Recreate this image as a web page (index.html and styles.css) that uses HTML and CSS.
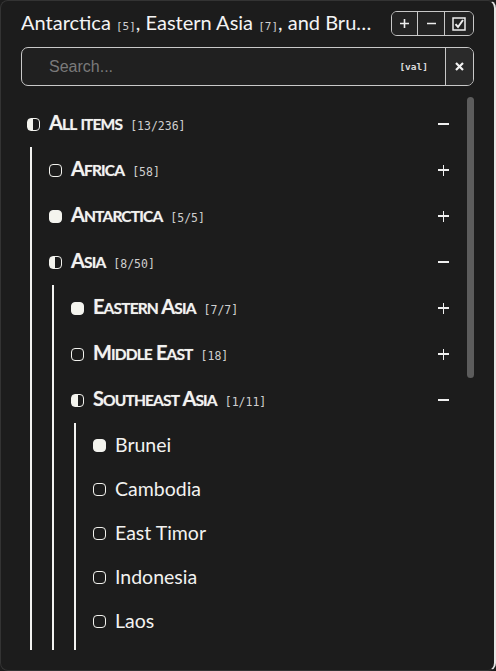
FILE: index.html
```html
<!DOCTYPE html>
<html lang="en">
<head>
<meta charset="utf-8">
<title>Region picker</title>
<link rel="stylesheet" href="styles.css">
</head>
<body>
<div class="panel">
  <header class="head">
    <h1 class="title">Antarctica <span class="tcount">[5]</span>, Eastern Asia <span class="tcount">[7]</span>, and Brunei <span class="tcount">[1]</span></h1>
    <div class="btns">
      <button class="btn b-plus" aria-label="Expand all"><svg width="9" height="9" viewBox="0 0 9 9"><path d="M0 4.5H9M4.5 0V9" stroke="#eee" stroke-width="1.6"/></svg></button>
      <button class="btn b-minus" aria-label="Collapse all"><svg width="9" height="9" viewBox="0 0 9 9"><path d="M0 4.5H9" stroke="#eee" stroke-width="1.4"/></svg></button>
      <button class="btn b-check" aria-label="Select all"><svg width="14" height="14" viewBox="0 0 14 14"><rect x="1" y="1" width="12" height="12" fill="none" stroke="#eee" stroke-width="1.5"/><path d="M3.5 7.2L6 10L11 3" fill="none" stroke="#eee" stroke-width="2"/></svg></button>
    </div>
  </header>

  <div class="search">
    <input class="input" type="text" placeholder="Search...">
    <span class="val">[val]</span>
    <button class="clear" aria-label="Clear"><svg width="9" height="9" viewBox="0 0 9 9"><path d="M1 1L8 8M8 1L1 8" stroke="#f2f2f2" stroke-width="2.2"/></svg></button>
  </div>

  <div class="tree-wrap">
    <div class="tree">
      <ul class="list root">
        <li>
          <div class="row"><span class="box half"></span><span class="text"><span class="label sc">A<span class="lc">ll</span> <span class="lc">items</span></span><span class="count">[13/236]</span></span><span class="tog minus"></span></div>
          <ul class="list kids">
            <li><div class="row"><span class="box"></span><span class="text"><span class="label sc">A<span class="lc">frica</span></span><span class="count">[58]</span></span><span class="tog plus"></span></div></li>
            <li><div class="row"><span class="box full"></span><span class="text"><span class="label sc">A<span class="lc">ntarctica</span></span><span class="count">[5/5]</span></span><span class="tog plus"></span></div></li>
            <li>
              <div class="row"><span class="box half"></span><span class="text"><span class="label sc">A<span class="lc">sia</span></span><span class="count">[8/50]</span></span><span class="tog minus"></span></div>
              <ul class="list kids">
                <li><div class="row"><span class="box full"></span><span class="text"><span class="label sc">E<span class="lc">astern</span> A<span class="lc">sia</span></span><span class="count">[7/7]</span></span><span class="tog plus"></span></div></li>
                <li><div class="row"><span class="box"></span><span class="text"><span class="label sc">M<span class="lc">iddle</span> E<span class="lc">ast</span></span><span class="count">[18]</span></span><span class="tog plus"></span></div></li>
                <li>
                  <div class="row"><span class="box half"></span><span class="text"><span class="label sc">S<span class="lc">outheast</span> A<span class="lc">sia</span></span><span class="count">[1/11]</span></span><span class="tog minus"></span></div>
                  <ul class="list kids">
                    <li><div class="row leaf"><span class="box full"></span><span class="text"><span class="label">Brunei</span></span></div></li>
                    <li><div class="row leaf"><span class="box"></span><span class="text"><span class="label">Cambodia</span></span></div></li>
                    <li><div class="row leaf"><span class="box"></span><span class="text"><span class="label">East Timor</span></span></div></li>
                    <li><div class="row leaf"><span class="box"></span><span class="text"><span class="label">Indonesia</span></span></div></li>
                    <li><div class="row leaf"><span class="box"></span><span class="text"><span class="label">Laos</span></span></div></li>
                    <li><div class="row leaf"><span class="box"></span><span class="text"><span class="label">Malaysia</span></span></div></li>
                    <li><div class="row leaf"><span class="box"></span><span class="text"><span class="label">Myanmar</span></span></div></li>
                    <li><div class="row leaf"><span class="box"></span><span class="text"><span class="label">Philippines</span></span></div></li>
                    <li><div class="row leaf"><span class="box"></span><span class="text"><span class="label">Singapore</span></span></div></li>
                    <li><div class="row leaf"><span class="box"></span><span class="text"><span class="label">Thailand</span></span></div></li>
                    <li><div class="row leaf"><span class="box"></span><span class="text"><span class="label">Vietnam</span></span></div></li>
                  </ul>
                </li>
                <li><div class="row"><span class="box"></span><span class="text"><span class="label sc">S<span class="lc">outh</span> A<span class="lc">sia</span></span><span class="count">[9]</span></span><span class="tog plus"></span></div></li>
                <li><div class="row"><span class="box"></span><span class="text"><span class="label sc">C<span class="lc">entral</span> A<span class="lc">sia</span></span><span class="count">[5]</span></span><span class="tog plus"></span></div></li>
              </ul>
            </li>
            <li><div class="row"><span class="box"></span><span class="text"><span class="label sc">E<span class="lc">urope</span></span><span class="count">[50]</span></span><span class="tog plus"></span></div></li>
            <li><div class="row"><span class="box"></span><span class="text"><span class="label sc">N<span class="lc">orth</span> A<span class="lc">merica</span></span><span class="count">[35]</span></span><span class="tog plus"></span></div></li>
            <li><div class="row"><span class="box"></span><span class="text"><span class="label sc">O<span class="lc">ceania</span></span><span class="count">[25]</span></span><span class="tog plus"></span></div></li>
            <li><div class="row"><span class="box"></span><span class="text"><span class="label sc">S<span class="lc">outh</span> A<span class="lc">merica</span></span><span class="count">[13]</span></span><span class="tog plus"></span></div></li>
          </ul>
        </li>
      </ul>
    </div>
    <div class="thumb"></div>
  </div>
</div>
</body>
</html>
```

FILE: styles.css
```css
* { box-sizing: border-box; }

html, body {
  margin: 0;
  padding: 0;
  background: #1c1c1c;
}

.panel {
  width: 496px;
  height: 671px;
  background: #1c1c1c;
  border: 1px solid #333;
  border-right: 2px solid #e6e6e6;
  border-radius: 8px;
  padding: 10px 20px 20px 20px;
  display: flex;
  flex-direction: column;
  color: #f2f2f0;
  font-family: Lato, "Noto Sans", sans-serif;
}

.head {
  display: flex;
  align-items: center;
  height: 25px;
}

.title {
  flex: 1;
  min-width: 0;
  margin: 2px 16px 0 0;
  font-size: 20px;
  font-weight: 400;
  line-height: 25px;
  white-space: nowrap;
  overflow: hidden;
  text-overflow: ellipsis;
  color: #f4f4f4;
}

.tcount {
  font-family: "DejaVu Sans Mono", monospace;
  font-size: 11px;
  color: #d0d0d0;
}

.btns {
  display: flex;
  height: 25px;
  border: 1px solid #c8c8c8;
  border-radius: 6px;
  overflow: hidden;
  flex: none;
}

.btn {
  display: flex;
  align-items: center;
  justify-content: center;
  height: 100%;
  padding: 0;
  border: 0;
  background: #232323;
  color: #eee;
}

.btn + .btn { border-left: 1px solid #c8c8c8; }

.b-plus { width: 25px; }
.b-minus { width: 27px; }
.b-check { width: 29px; }

.search {
  display: flex;
  align-items: center;
  height: 39px;
  margin-top: 11px;
  border: 1px solid #c8c8c8;
  border-radius: 7px;
  overflow: hidden;
  background: #202020;
}

.input {
  flex: 1;
  min-width: 0;
  height: 100%;
  border: 0;
  outline: none;
  background: transparent;
  padding: 0 0 0 27px;
  font-family: "Liberation Sans", Arial, sans-serif;
  font-size: 16px;
  color: #eee;
}

.input::placeholder { color: #7a7a7a; }

.val {
  font-family: "DejaVu Sans Mono", monospace;
  font-size: 9.5px;
  font-weight: bold;
  color: #dcdcdc;
  margin-right: 17px;
}

.clear {
  display: flex;
  align-items: center;
  justify-content: center;
  width: 28px;
  height: 100%;
  border: 0;
  border-left: 1px solid #c8c8c8;
  background: #2a2a2a;
  padding: 0;
}

.tree-wrap {
  position: relative;
  margin-top: 10px;
  flex: 1;
  min-height: 0;
  display: flex;
}

.tree {
  flex: 1;
  min-width: 0;
  overflow: hidden;
  padding: 5px 0 7px;
}

.thumb {
  position: absolute;
  right: 0;
  top: 1px;
  width: 7px;
  height: 281px;
  background: #5c5c5c;
  border-radius: 4px;
}

.list {
  list-style: none;
  margin: 0;
  padding: 0;
}

.kids {
  margin-left: 9px;
  padding-left: 11px;
  border-left: 2px solid #f2f2f0;
}

.row {
  display: flex;
  align-items: center;
  height: 46px;
  padding-left: 6px;
  padding-right: 25px;
}

.row.leaf { height: 44px; }

.box {
  flex: none;
  width: 13px;
  height: 13px;
  border: 1.5px solid #f2f2ee;
  border-radius: 4px;
  margin-right: 9px;
}

.box.full { background: #f4f4ee; }

.box.half {
  background: linear-gradient(to right, #f4f4ee 50%, transparent 50%);
}

.text {
  white-space: nowrap;
  line-height: 24px;
}

.label {
  font-size: 19.5px;
  color: #f2f2f0;
}

.label.sc {
  font-size: 20px;
  font-weight: 700;
  letter-spacing: -0.9px;
  text-shadow: 0 0 1px rgba(255, 255, 255, 0.45);
}

.lc {
  text-transform: uppercase;
  font-size: 0.78em;
}

.count {
  font-family: "DejaVu Sans Mono", monospace;
  font-size: 11.5px;
  color: #cfcfcf;
  margin-left: 8px;
}

.tog {
  margin-left: auto;
  width: 11px;
  height: 11px;
  position: relative;
  flex: none;
}

.tog::before,
.tog.plus::after {
  content: "";
  position: absolute;
  background: #efefef;
}

.tog::before {
  left: 0;
  right: 0;
  top: 4.5px;
  height: 1.8px;
}

.tog.plus::after {
  top: 0;
  bottom: 0;
  left: 4.6px;
  width: 1.8px;
}
```
